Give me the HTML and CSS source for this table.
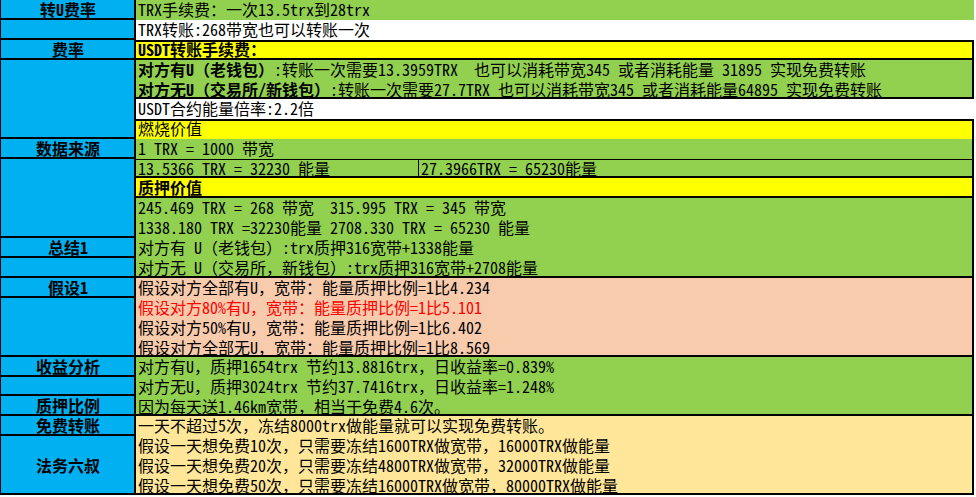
FILE: index.html
```html
<!DOCTYPE html>
<html lang="zh-CN">
<head>
<meta charset="utf-8">
<title>转U费率</title>
<link rel="stylesheet" href="styles.css">
</head>
<body>
<div class="sheet">
  <div class="hd g1">转U费率</div>
  <div class="cell green g1"><div class="ln">TRX手续费：一次13.5trx到28trx</div></div>

  <div class="hd g2"></div>
  <div class="cell white g2"><div class="ln">TRX转账:268带宽也可以转账一次</div></div>

  <div class="hd g3">费率</div>
  <div class="cell yellow g3 bx-top bx-bot bx-right"><div class="ln b">USDT转账手续费：</div></div>

  <div class="hd g4-8"></div>
  <div class="cell green g4-6 bx-bot bx-right">
    <div class="ln"><b>对方有U（老钱包）</b>:转账一次需要13.3959TRX  也可以消耗带宽345 或者消耗能量 31895 实现免费转账</div>
    <div class="ln"><b>对方无U（交易所/新钱包）</b>:转账一次需要27.7TRX 也可以消耗带宽345 或者消耗能量64895 实现免费转账</div>
  </div>

  <div class="cell white g6"><div class="ln">USDT合约能量倍率:2.2倍</div></div>

  <div class="cell yellow g7 bx-top bx-right"><div class="ln">燃烧价值</div></div>

  <div class="hd g8">数据来源</div>
  <div class="cell green g8 bx-right"><div class="ln">1 TRX = 1000 带宽</div></div>

  <div class="hd g9-13"></div>
  <div class="split green g9 bx-top1 bx-bot bx-right">
    <div class="sub left-sub"><div class="ln">13.5366 TRX = 32230 能量</div></div>
    <div class="sub"><div class="ln">27.3966TRX = 65230能量</div></div>
  </div>

  <div class="cell yellow g10 bx-bot bx-right"><div class="ln b">质押价值</div></div>

  <div class="cell green g11-15 bx-bot bx-right">
    <div class="ln">245.469 TRX = 268 带宽  315.995 TRX = 345 带宽</div>
    <div class="ln">1338.180 TRX =32230能量 2708.330 TRX = 65230 能量</div>
    <div class="ln">对方有 U（老钱包）:trx质押316宽带+1338能量</div>
    <div class="ln">对方无 U（交易所，新钱包）:trx质押316宽带+2708能量</div>
  </div>

  <div class="hd g13">总结1</div>
  <div class="hd g14"></div>

  <div class="hd g15">假设1</div>
  <div class="hd g16-19"></div>
  <div class="cell peach g15-19 bx-bot bx-right">
    <div class="ln">假设对方全部有U，宽带：能量质押比例=1比4.234</div>
    <div class="ln red">假设对方80%有U，宽带：能量质押比例=1比5.101</div>
    <div class="ln">假设对方50%有U，宽带：能量质押比例=1比6.402</div>
    <div class="ln">假设对方全部无U，宽带：能量质押比例=1比8.569</div>
  </div>

  <div class="hd g19">收益分析</div>
  <div class="hd g20"></div>
  <div class="hd g21">质押比例</div>
  <div class="cell green g19-22 bx-bot bx-right">
    <div class="ln">对方有U，质押1654trx 节约13.8816trx，日收益率=0.839%</div>
    <div class="ln">对方无U，质押3024trx 节约37.7416trx，日收益率=1.248%</div>
    <div class="ln">因为每天送1.46km宽带，相当于免费4.6次。</div>
  </div>

  <div class="hd g22">免费转账</div>
  <div class="hd g23-26">法务六叔</div>
  <div class="cell cream g22-26 bx-bot bx-right">
    <div class="ln">一天不超过5次，冻结8000trx做能量就可以实现免费转账。</div>
    <div class="ln">假设一天想免费10次，只需要冻结1600TRX做宽带，16000TRX做能量</div>
    <div class="ln">假设一天想免费20次，只需要冻结4800TRX做宽带，32000TRX做能量</div>
    <div class="ln">假设一天想免费50次，只需要冻结16000TRX做宽带，80000TRX做能量</div>
  </div>
</div>
</body>
</html>
```

FILE: styles.css
```css
* {
  box-sizing: border-box;
  margin: 0;
  padding: 0;
}

body {
  margin: 0;
  background: #ffffff;
  color: #000000;
  font-family: "Noto Sans Mono CJK SC", "Noto Sans CJK SC", "Noto Sans", sans-serif;
  font-size: 16px;
}

.sheet {
  display: grid;
  width: 974px;
  grid-template-columns: 136px 838px;
  grid-template-rows:
    20px 20px 20px 20px 19px
    20px 20px 20px 19px 20px
    20px 20px 20px 20px 20px
    19px 20px 20px 20px 19px
    20px 20px 19px 20px 20px;
}

.hd {
  grid-column: 1;
  background: #00b0f0;
  font-weight: bold;
  display: flex;
  align-items: center;
  justify-content: center;
  line-height: 18px;
  padding-bottom: 2px;
  box-shadow: inset 1px 0 #000, inset -2px 0 #000, inset 0 -2px #000;
}

.cell,
.split {
  grid-column: 2;
}

.cell {
  display: flex;
  flex-direction: column;
  padding-left: 2px;
}

.ln {
  flex: 1;
  display: flex;
  align-items: center;
  white-space: pre;
  line-height: 18px;
  padding-bottom: 2px;
}

.b,
.ln b {
  font-weight: bold;
}

.red {
  color: #ff0000;
}

.green { background: #92d050; }
.white { background: #ffffff; }
.yellow { background: #ffff00; }
.peach { background: #f8cbad; }
.cream { background: #ffe699; }

.split {
  display: grid;
  grid-template-columns: 283px 1fr;
}

.sub {
  display: flex;
  flex-direction: column;
  padding-left: 2px;
}

.left-sub {
  box-shadow: inset -1px 0 #000;
}

/* borders drawn as inset shadows so they don't move text */
.bx-top { box-shadow: inset 0 2px #000; }
.bx-top.bx-right { box-shadow: inset 0 2px #000, inset -2px 0 #000; }
.bx-bot.bx-right { box-shadow: inset 0 -2px #000, inset -2px 0 #000; }
.bx-top.bx-bot.bx-right { box-shadow: inset 0 2px #000, inset 0 -2px #000, inset -2px 0 #000; }
.bx-top1.bx-bot.bx-right { box-shadow: inset 0 1px #000, inset 0 -2px #000, inset -2px 0 #000; }
.bx-right { box-shadow: inset -2px 0 #000; }

/* grid rows */
.g1 { grid-row: 1; }
.g2 { grid-row: 2; }
.g3 { grid-row: 3; }
.g4-6 { grid-row: 4 / 6; }
.g4-8 { grid-row: 4 / 8; }
.g6 { grid-row: 6; }
.g7 { grid-row: 7; }
.g8 { grid-row: 8; }
.g9 { grid-row: 9; }
.g9-13 { grid-row: 9 / 13; }
.g10 { grid-row: 10; }
.g11-15 { grid-row: 11 / 15; }
.g13 { grid-row: 13; }
.g14 { grid-row: 14; }
.g15 { grid-row: 15; }
.g15-19 { grid-row: 15 / 19; }
.g16-19 { grid-row: 16 / 19; }
.g19 { grid-row: 19; }
.g19-22 { grid-row: 19 / 22; }
.g20 { grid-row: 20; }
.g21 { grid-row: 21; }
.g22 { grid-row: 22; }
.g22-26 { grid-row: 22 / 26; }
.g23-26 { grid-row: 23 / 26; }
```
